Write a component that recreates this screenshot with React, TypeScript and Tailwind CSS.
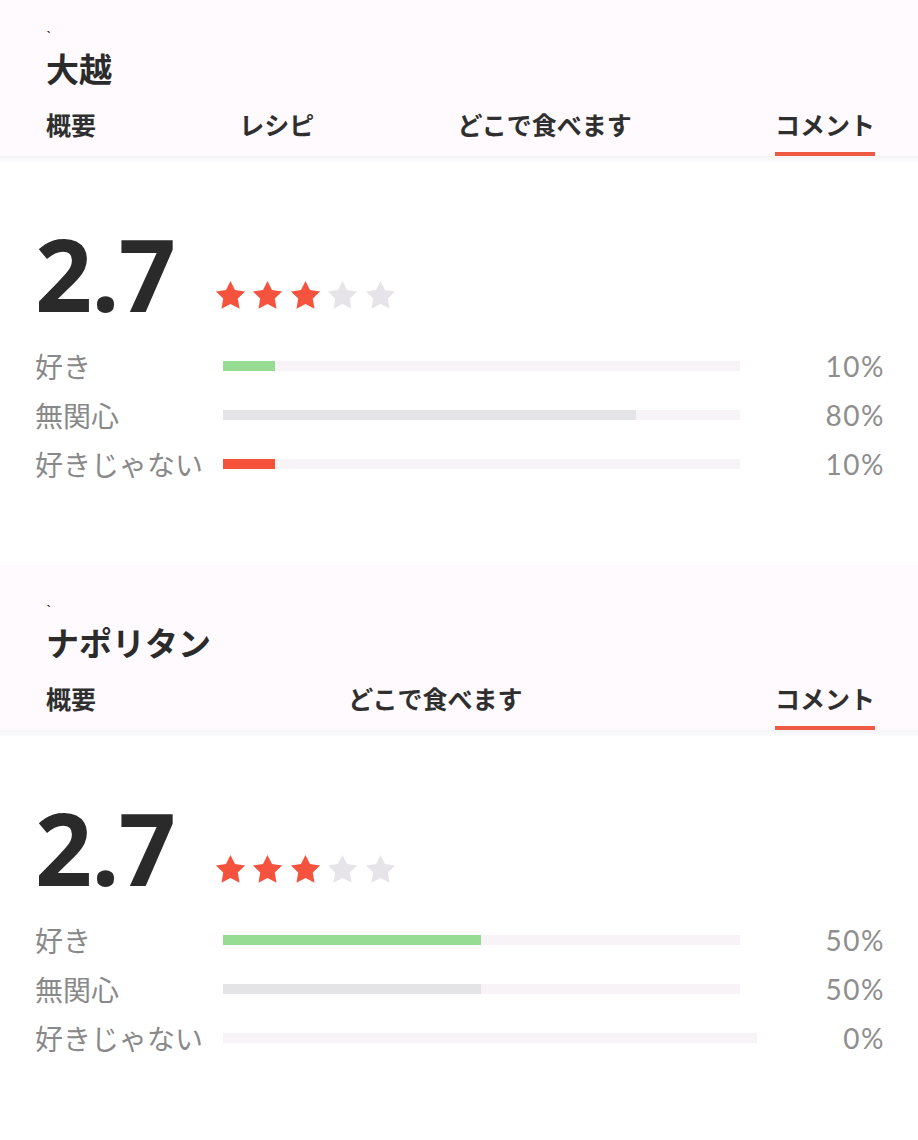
import React from "react";

type Row = { label: string; pct: number; fill: string };

type Dish = {
  name: string;
  tabs: string[];
  active: string;
  rating: string;
  stars: number;
  rows: Row[];
  top: string;
};

const dishes: Dish[] = [
  {
    name: "大越",
    tabs: ["概要", "レシピ", "どこで食べます", "コメント"],
    active: "コメント",
    rating: "2.7",
    stars: 3,
    top: "pt-[29px]",
    rows: [
      { label: "好き", pct: 10, fill: "bg-[#97dc93]" },
      { label: "無関心", pct: 80, fill: "bg-[#e4e3e6]" },
      { label: "好きじゃない", pct: 10, fill: "bg-[#f5513b]" },
    ],
  },
  {
    name: "ナポリタン",
    tabs: ["概要", "どこで食べます", "コメント"],
    active: "コメント",
    rating: "2.7",
    stars: 3,
    top: "pt-[38px]",
    rows: [
      { label: "好き", pct: 50, fill: "bg-[#97dc93]" },
      { label: "無関心", pct: 50, fill: "bg-[#e4e3e6]" },
      { label: "好きじゃない", pct: 0, fill: "bg-[#f5513b]" },
    ],
  },
];

function Star({ on }: { on: boolean }) {
  return (
    <svg width="35" height="35" viewBox="0 0 24 24" className={on ? "text-[#f5533d]" : "text-[#e6e4e9]"}>
      <polygon
        fill="currentColor"
        points="12,2 15.09,8.26 22,9.27 17,14.14 18.18,21.02 12,17.77 5.82,21.02 7,14.14 2,9.27 8.91,8.26"
      />
    </svg>
  );
}

function DishCard({ dish, last }: { dish: Dish; last: boolean }) {
  return (
    <section className={last ? "" : "mb-[77px]"}>
      <header className={`bg-[#fffafe] ${dish.top} pl-[46px] pr-[43px]`}>
        <div className="h-[14px] font-['Lato',sans-serif] text-[15px] leading-none text-[#222]">`</div>
        <h1 className="mt-[1px] text-[33px] leading-[48px] font-bold text-[#2b2b2b]">{dish.name}</h1>
        <nav className="mt-[16px] flex justify-between">
          {dish.tabs.map((t) => (
            <div
              key={t}
              className={`pb-[12px] border-b-4 text-[25px] leading-[32px] font-bold text-[#2f2f2f] ${
                t === dish.active ? "border-[#ef5a44]" : "border-transparent"
              }`}
            >
              {t}
            </div>
          ))}
        </nav>
      </header>
      <div className="h-[6px] bg-gradient-to-b from-[#f2f4f8] to-[#fbfcfd]" />

      <div className="pl-[35px] pr-[33px]">
        <div className="mt-[61px] flex items-end">
          <div className="font-['Open_Sans',sans-serif] font-bold text-[100px] leading-none text-[#2a2a2a] tracking-[-1px]">
            {dish.rating}
          </div>
          <div className="ml-[38px] mb-[10px] flex gap-[2.5px]">
            {[0, 1, 2, 3, 4].map((i) => (
              <Star key={i} on={i < dish.stars} />
            ))}
          </div>
        </div>

        <div className="mt-[18px]">
          {dish.rows.map((r) => (
            <div key={r.label} className="h-[49px] flex items-center">
              <div className="w-[188px] shrink-0 text-[28px] text-[#898989]">{r.label}</div>
              <div className="flex-1 h-[10px] bg-[#f7f3f6]">
                <div className={`h-full ${r.fill}`} style={{ width: `${r.pct}%` }} />
              </div>
              <div className="ml-[86px] text-right font-['Lato',sans-serif] text-[28px] tracking-[1.5px] text-[#8e8e8e]">
                {r.pct}%
              </div>
            </div>
          ))}
        </div>
      </div>
    </section>
  );
}

export default function App() {
  return (
    <div className="min-h-screen bg-white font-['Noto_Sans_CJK_JP','Noto_Sans',sans-serif]">
      {dishes.map((d, i) => (
        <DishCard key={d.name} dish={d} last={i === dishes.length - 1} />
      ))}
    </div>
  );
}
